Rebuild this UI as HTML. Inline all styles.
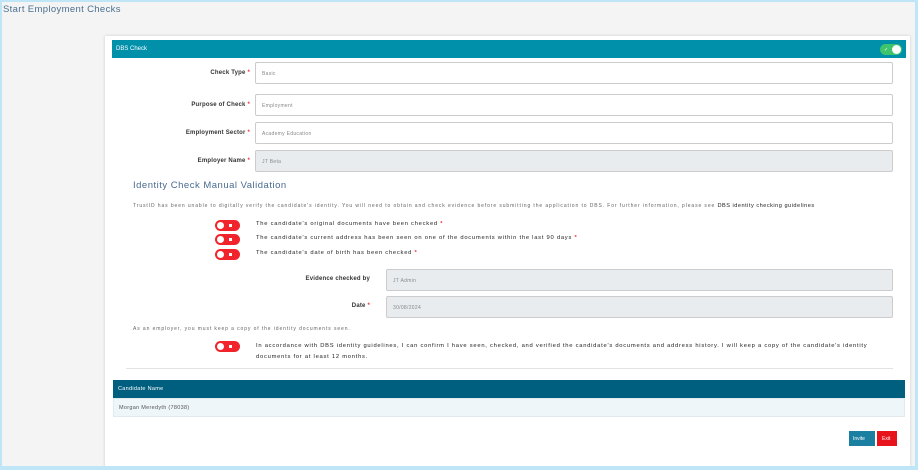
<!DOCTYPE html>
<html><head><style>
*{box-sizing:border-box;margin:0;padding:0}
body{width:918px;height:470px;overflow:hidden;font-family:"Liberation Sans",sans-serif;background:#f4f4f4;position:relative}
.frame{position:absolute;left:0;top:0;width:918px;height:470px;border:2px solid #bfe6f7;border-right-width:3px;border-bottom-width:4px}
.abs{position:absolute}
.title{left:3px;top:4px;font-size:9.5px;color:#4a7090;letter-spacing:0.35px}
.card{left:105px;top:36px;width:805px;height:431px;background:#fff;box-shadow:0 0 3px #ccc}
.hdr{left:112px;top:40px;width:794px;height:18px;background:#0090aa;color:#fff;font-size:6px;padding:6px 4px}
.lbl{font-size:6px;color:#333;text-align:right;width:140px;left:110px;font-weight:bold;letter-spacing:0.2px}
.lbl b{color:#e33}
.inp{left:255px;width:638px;height:22px;border:1px solid #ccc;border-radius:2px;font-size:5px;color:#888;padding:8px 6px;background:#fff;letter-spacing:0.3px}
.inp.g{background:#e9ecef}
.tg{left:215px;width:25px;height:11px;background:#f0242a;border-radius:6px}
.tg:before{content:"";position:absolute;left:2px;top:2px;width:7px;height:7px;background:#fff;border-radius:50%}
.tg:after{content:"";position:absolute;left:14px;top:4px;width:3px;height:3px;background:#fff}
.t{font-size:5.8px;color:#222;letter-spacing:0.75px}
.t b{color:#e33}
.small{font-size:5px;color:#666;letter-spacing:0.9px}
</style></head><body>
<div class="abs title">Start Employment Checks</div>
<div class="abs card"></div>
<div class="abs hdr">DBS Check</div>
<div class="abs" style="left:880px;top:44px;width:22px;height:11px;background:#3ec46d;border-radius:6px"><div style="position:absolute;right:1px;top:1px;width:9px;height:9px;background:#fff;border-radius:50%"></div><div style="position:absolute;left:4px;top:3px;font-size:5px;color:#fff">✓</div></div>

<div class="abs lbl" style="top:70px">Check Type <b>*</b></div>
<div class="abs inp" style="top:62px">Basic</div>
<div class="abs lbl" style="top:102px">Purpose of Check <b>*</b></div>
<div class="abs inp" style="top:94px">Employment</div>
<div class="abs lbl" style="top:130px">Employment Sector <b>*</b></div>
<div class="abs inp" style="top:122px">Academy Education</div>
<div class="abs lbl" style="top:158px">Employer Name <b>*</b></div>
<div class="abs inp g" style="top:150px">JT Beta</div>

<div class="abs" style="left:133px;top:180px;font-size:9.5px;color:#4a6a90;letter-spacing:0.5px">Identity Check Manual Validation</div>
<div class="abs small" style="left:133px;top:203px;white-space:nowrap">TrustID has been unable to digitally verify the candidate's identity. You will need to obtain and check evidence before submitting the application to DBS. For further information, please see <span style="color:#222;font-size:5.6px;letter-spacing:0.5px">DBS identity checking guidelines</span></div>

<div class="abs tg" style="top:220px"></div>
<div class="abs t" style="left:256px;top:221px">The candidate's original documents have been checked <b>*</b></div>
<div class="abs tg" style="top:234px"></div>
<div class="abs t" style="left:256px;top:235px">The candidate's current address has been seen on one of the documents within the last 90 days <b>*</b></div>
<div class="abs tg" style="top:249px"></div>
<div class="abs t" style="left:256px;top:250px">The candidate's date of birth has been checked <b>*</b></div>

<div class="abs lbl" style="top:276px;left:230px">Evidence checked by</div>
<div class="abs inp g" style="top:269px;left:386px;width:507px">JT Admin</div>
<div class="abs lbl" style="top:303px;left:230px">Date <b>*</b></div>
<div class="abs inp g" style="top:296px;left:386px;width:507px">30/08/2024</div>

<div class="abs small" style="left:133px;top:326px">As an employer, you must keep a copy of the identity documents seen.</div>
<div class="abs tg" style="top:341px"></div>
<div class="abs t" style="left:256px;top:341px;width:625px;line-height:11px">In accordance with DBS identity guidelines, I can confirm I have seen, checked, and verified the candidate's documents and address history. I will keep a copy of the candidate's identity documents for at least 12 months.</div>

<div class="abs" style="left:126px;top:368px;width:767px;height:1px;background:#e2e2e2"></div>
<div class="abs" style="left:113px;top:380px;width:792px;height:18px;background:#005f7f;color:#fff;font-size:5.5px;padding:6px 5px;letter-spacing:0.3px">Candidate Name</div>
<div class="abs" style="left:113px;top:398px;width:792px;height:19px;background:#eef6fa;border:1px solid #e3eaee;color:#555;font-size:5.5px;padding:6px 5px;letter-spacing:0.3px">Morgan Meredyth (78038)</div>

<div class="abs" style="left:849px;top:431px;width:26px;height:15px;background:#1a7fa0;color:#fff;font-size:5px;padding:5px 4px">Invite</div>
<div class="abs" style="left:877px;top:431px;width:20px;height:15px;background:#e8141c;color:#fff;font-size:5px;padding:5px 5px">Exit</div>
<div class="frame"></div>
</body></html>
